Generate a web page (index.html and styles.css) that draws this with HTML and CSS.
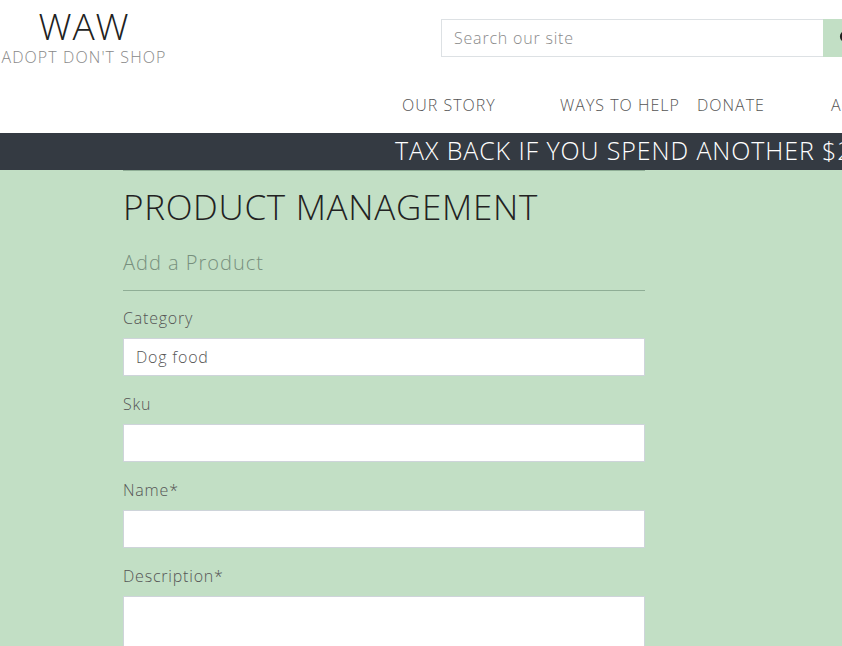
FILE: index.html
```html
<!DOCTYPE html>
<html lang="en">
<head>
<meta charset="utf-8">
<title>Product Management</title>
<link rel="stylesheet" href="styles.css">
</head>
<body>
<header class="site-header">
  <div class="top-row">
    <a class="brand" href="#">
      <span class="brand-name">WAW</span>
      <span class="brand-tag">ADOPT DON'T SHOP</span>
    </a>
    <form class="search">
      <input class="search-input" type="text" placeholder="Search our site">
      <button class="search-btn" type="button" aria-label="Search">
        <svg width="16" height="16" viewBox="0 0 16 16"><circle cx="6.5" cy="6.5" r="4.5" fill="none" stroke="#222" stroke-width="2.2"/><line x1="10" y1="10" x2="14.5" y2="14.5" stroke="#222" stroke-width="2.4" stroke-linecap="round"/></svg>
      </button>
    </form>
  </div>
  <nav class="main-nav">
    <a href="#" class="nav-link">OUR STORY</a>
    <a href="#" class="nav-link">WAYS TO HELP</a>
    <a href="#" class="nav-link">DONATE</a>
    <a href="#" class="nav-link">ACCOUNT</a>
  </nav>
</header>
<div class="banner">
  <p class="banner-text">TAX BACK IF YOU SPEND ANOTHER $20.00 FOR FREE DELIVERY</p>
</div>
<main class="page">
  <div class="content">
    <hr class="rule">
    <h1 class="page-title">PRODUCT MANAGEMENT</h1>
    <h2 class="sub-title">Add a Product</h2>
    <hr class="rule rule-sub">
    <form class="product-form">
      <div class="field">
        <label class="field-label">Category</label>
        <div class="field-input">Dog food</div>
      </div>
      <div class="field">
        <label class="field-label">Sku</label>
        <input class="field-input" type="text">
      </div>
      <div class="field">
        <label class="field-label">Name*</label>
        <input class="field-input" type="text">
      </div>
      <div class="field">
        <label class="field-label">Description*</label>
        <textarea class="field-input field-area"></textarea>
      </div>
    </form>
  </div>
</main>
</body>
</html>
```
FILE: styles.css
```css
* { box-sizing: border-box; }
html, body { margin: 0; padding: 0; }
body {
  width: 842px;
  height: 646px;
  overflow: hidden;
  background: #c2dfc5;
  font-family: "Open Sans", "Liberation Sans", sans-serif;
  font-weight: 300;
  color: #555;
}
.site-header {
  background: #fff;
  height: 133px;
  overflow: hidden;
}
.top-row {
  display: flex;
  align-items: flex-start;
  height: 80px;
}
.brand {
  width: 168px;
  flex-shrink: 0;
  display: flex;
  flex-direction: column;
  align-items: center;
  text-decoration: none;
  padding-top: 7px;
}
.brand-name {
  font-size: 37px;
  line-height: 38px;
  color: #222;
  letter-spacing: 1px;
}
.brand-tag {
  margin-top: 2px;
  font-size: 16px;
  line-height: 20px;
  color: #888;
  letter-spacing: 1.1px;
  white-space: nowrap;
}
.search {
  display: flex;
  flex-shrink: 0;
  margin-left: 273px;
  margin-top: 19px;
}
.search-input {
  width: 382px;
  height: 38px;
  border: 1px solid #dde1e4;
  border-right: none;
  padding: 0 12px;
  font-family: inherit;
  font-weight: 300;
  font-size: 16px;
  letter-spacing: 0.8px;
  color: #555;
  outline: none;
}
.search-input::placeholder { color: #8a8a8a; }
.search-btn {
  width: 44px;
  height: 38px;
  background: #c2dfc5;
  border: 1px solid #c2dfc5;
  padding: 0 0 0 15px;
  display: flex;
  align-items: center;
  flex-shrink: 0;
}
.main-nav {
  display: grid;
  grid-template-columns: 158px 137px 134px auto;
  padding-left: 402px;
  padding-top: 13px;
}
.nav-link {
  font-size: 16px;
  line-height: 24px;
  color: #555;
  letter-spacing: 1px;
  text-decoration: none;
  white-space: nowrap;
}
.banner {
  background: #343a42;
  height: 37px;
  overflow: hidden;
}
.banner-text {
  margin: 0;
  padding-left: 395px;
  white-space: nowrap;
  color: #fff;
  font-size: 25px;
  line-height: 34px;
  letter-spacing: 0.9px;
}
.page {
  padding-left: 123px;
}
.content {
  width: 522px;
}
.rule {
  margin: 0;
  border: none;
  border-top: 1px solid #8fae96;
}
.page-title {
  margin: 16px 0 0;
  font-size: 35px;
  line-height: 40px;
  font-weight: 300;
  color: #222;
  letter-spacing: 0.7px;
}
.sub-title {
  margin: 21px 0 0;
  font-size: 20px;
  line-height: 30px;
  font-weight: 300;
  color: #778f7d;
  letter-spacing: 1px;
}
.rule-sub {
  margin-top: 12px;
}
.product-form {
  padding-top: 15px;
}
.field {
  display: flex;
  flex-direction: column;
  margin-bottom: 16px;
}
.field-label {
  font-size: 16px;
  line-height: 24px;
  color: #555;
  letter-spacing: 0.8px;
  margin-bottom: 8px;
}
.field-input {
  width: 522px;
  height: 38px;
  background: #fff;
  border: 1px solid #ced4da;
  padding: 0 12px;
  font-family: inherit;
  font-weight: 300;
  font-size: 16px;
  line-height: 36px;
  letter-spacing: 0.8px;
  color: #555;
}
.field-area {
  height: 100px;
  resize: none;
}
```
